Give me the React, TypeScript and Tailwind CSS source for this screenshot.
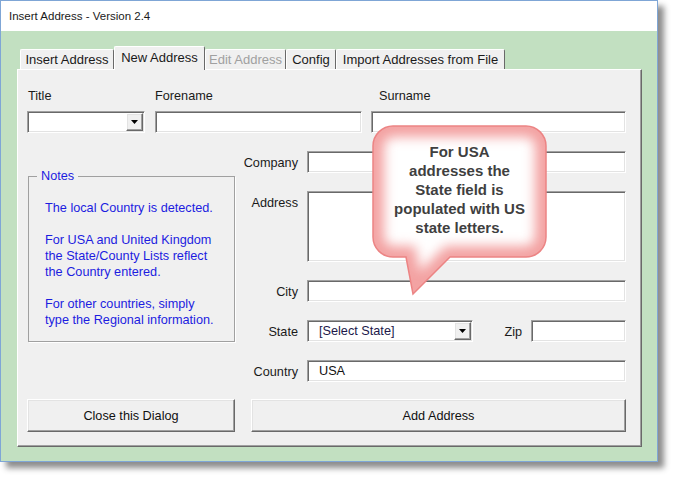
import React from "react";

const sunken =
  "bg-white border border-t-[#a0a0a0] border-l-[#a0a0a0] border-r-white border-b-white shadow-[inset_1px_1px_0_#696969,inset_-1px_-1px_0_#e3e3e3]";
const raised =
  "bg-[#f0f0f0] border border-t-white border-l-white border-r-[#696969] border-b-[#696969] shadow-[inset_-1px_-1px_0_#a0a0a0,inset_1px_1px_0_#e3e3e3]";

const tabs = [
  { label: "Insert Address", w: "w-[94px]", active: false, disabled: false },
  { label: "New Address", w: "w-[91px]", active: true, disabled: false },
  { label: "Edit Address", w: "w-[81px]", active: false, disabled: true },
  { label: "Config", w: "w-[50px]", active: false, disabled: false },
  { label: "Import Addresses from File", w: "w-[169px]", active: false, disabled: false },
];

function Arrow() {
  return (
    <svg width="7" height="4" viewBox="0 0 7 4">
      <polygon points="0,0 7,0 3.5,4" fill="#000" />
    </svg>
  );
}

function Select({ value, className }: { value?: string; className: string }) {
  return (
    <div className={`${sunken} ${className} flex h-full p-px`}>
      <div className="flex flex-1 items-center pl-[10px] text-[#20184a]">{value}</div>
      <div className={`${raised} flex h-full w-[17px] items-center justify-center`}>
        <Arrow />
      </div>
    </div>
  );
}

function Label({ children, top }: { children: React.ReactNode; top?: boolean }) {
  return (
    <div
      className={`col-start-3 flex justify-end whitespace-nowrap text-[#1a1a1a] ${
        top ? "items-start pt-[5px]" : "items-center pt-px"
      }`}
    >
      {children}
    </div>
  );
}

function Callout() {
  const d =
    "M21,1 H154 A20,20 0 0 1 174,21 V112 A20,20 0 0 1 154,132 H78 L41,169 L34,132 H21 A20,20 0 0 1 1,112 V21 A20,20 0 0 1 21,1 Z";
  return (
    <div className="absolute left-[372px] top-[125px] h-[172px] w-[176px]">
      <svg width="176" height="172" viewBox="0 0 176 172" className="absolute inset-0">
        <defs>
          <clipPath id="bubble">
            <path d={d} />
          </clipPath>
          <filter id="soft" x="-20%" y="-20%" width="140%" height="140%">
            <feGaussianBlur stdDeviation="6" />
          </filter>
        </defs>
        <path d={d} fill="#ffffff" />
        <g clipPath="url(#bubble)">
          <path d={d} fill="none" stroke="#f3a2a2" strokeWidth="22" filter="url(#soft)" />
        </g>
        <path d={d} fill="none" stroke="#ec8484" strokeWidth="1.5" />
      </svg>
      <div className="absolute left-px top-[17px] w-[173px] text-center text-[15px] font-bold leading-[19px] text-[#3f3f3f]">
        For USA
        <br />
        addresses the
        <br />
        State field is
        <br />
        populated with US
        <br />
        state letters.
      </div>
    </div>
  );
}

export default function App() {
  return (
    <div className="relative h-[477px] w-[673px] bg-white font-['Liberation_Sans',Arial,sans-serif] text-[12.7px] leading-[14px]">
      <div className="flex h-[462px] w-[658px] flex-col border border-[#7fa6d6] shadow-[6px_6px_6px_rgba(0,0,0,0.45)]">
        <div className="flex h-[30px] items-center bg-white pl-[8px] text-[11.5px] text-[#1a1a1a]">
          Insert Address - Version 2.4
        </div>

        <div className="flex flex-1 flex-col bg-[#c2e0c1] pb-[14px] pl-[16px] pr-[15px] pt-[15px]">
          {/* tab strip */}
          <div className="flex h-[23px] items-end pl-[3px]">
            {tabs.map((t) => (
              <div
                key={t.label}
                className={`${t.w} flex items-center justify-center whitespace-nowrap rounded-t-[2px] border-l border-r border-t border-l-white border-r-[#696969] border-t-white bg-[#f0f0f0] text-[13px] ${
                  t.active ? "relative z-10 -mb-px h-[24px] pb-[2px]" : "h-[20px]"
                } ${t.disabled ? "text-[#a0a0a0]" : "text-[#1a1a1a]"}`}
              >
                {t.label}
              </div>
            ))}
          </div>

          {/* tab page */}
          <div className="flex flex-1 flex-col border border-b-[#696969] border-l-white border-r-[#696969] border-t-white bg-[#f0f0f0] pl-[9px] pt-[19px] shadow-[inset_-1px_-1px_0_#a0a0a0]">
            <div className="flex h-[14px] text-[#1a1a1a]">
              <div className="w-[128px] pl-px">Title</div>
              <div className="w-[224px]">Forename</div>
              <div>Surname</div>
            </div>
            <div className="mt-[8px] flex h-[22px] gap-x-[10px]">
              <Select className="w-[118px]" />
              <div className={`${sunken} w-[207px]`} />
              <div className={`${sunken} ml-[-1px] w-[255px]`} />
            </div>

            <div className="mt-[18px] grid grid-cols-[208px_7px_56px_9px_319px] grid-rows-[22px_71px_22px_22px_22px_32px] gap-y-[18px]">
              <fieldset className="col-start-1 row-span-4 row-start-1 mt-[18px] ml-px border border-[#a0a0a0] shadow-[1px_1px_0_#fff]">
                <legend className="ml-[8px] px-[4px] text-[#1c1ce0]">Notes</legend>
                <div className="pl-[16px] pt-[17px] leading-[16px] text-[#1c1ce0]">
                  The local Country is detected.
                  <br />
                  <br />
                  For USA and United Kingdom
                  <br />
                  the State/County Lists reflect
                  <br />
                  the Country entered.
                  <br />
                  <br />
                  For other countries, simply
                  <br />
                  type the Regional information.
                </div>
              </fieldset>

              <Label>Company</Label>
              <div className={`${sunken} col-start-5 row-start-1`} />

              <Label top>Address</Label>
              <div className={`${sunken} col-start-5 row-start-2`} />

              <Label>City</Label>
              <div className={`${sunken} col-start-5 row-start-3`} />

              <Label>State</Label>
              <div className="col-start-5 row-start-4 flex">
                <Select value="[Select State]" className="w-[166px]" />
                <div className="ml-auto flex items-center pt-px text-[#1a1a1a]">Zip</div>
                <div className={`${sunken} ml-[9px] w-[95px]`} />
              </div>

              <div className="col-start-3 row-start-5 flex items-center justify-end pt-px text-[#1a1a1a]">Country</div>
              <div className={`${sunken} col-start-5 row-start-5 flex items-center pl-[11px] text-[#111]`}>USA</div>

              <button className={`${raised} col-start-1 row-start-6 -mt-px flex items-center justify-center text-[#111]`}>
                Close this Dialog
              </button>
              <button
                className={`${raised} col-span-3 col-start-3 row-start-6 -mt-px ml-[9px] flex items-center justify-center text-[#111]`}
              >
                Add Address
              </button>
            </div>
          </div>
        </div>
      </div>

      <Callout />
    </div>
  );
}
